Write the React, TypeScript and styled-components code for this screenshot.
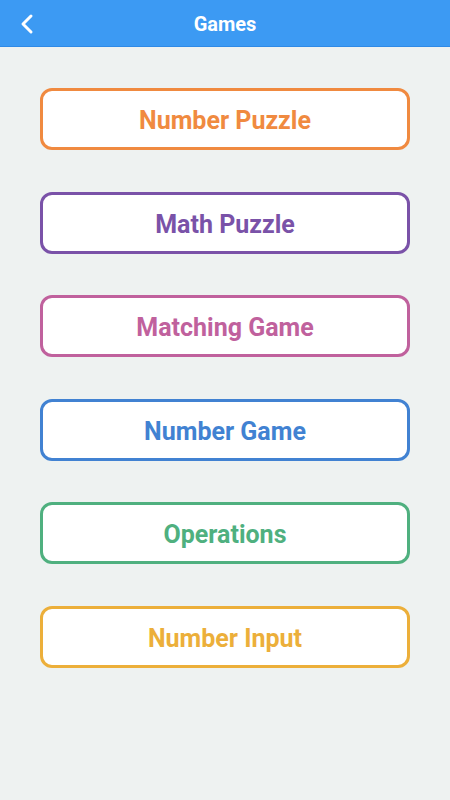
import styled, { createGlobalStyle } from "styled-components";

const Global = createGlobalStyle`
  html, body {
    margin: 0;
    padding: 0;
    background: #eef2f1;
    font-family: Roboto, "Liberation Sans", Arial, sans-serif;
  }
`;

const Page = styled.div`
  width: 450px;
  min-height: 800px;
  background: #eef2f1;
`;

const Header = styled.header`
  height: 46px;
  background: #3c9af3;
  border-bottom: 1px solid #2f8ae6;
  display: flex;
  align-items: center;
  justify-content: center;
  position: relative;
`;

const Back = styled.button`
  position: absolute;
  left: 12px;
  top: 8px;
  width: 30px;
  height: 32px;
  border: none;
  background: transparent;
  padding: 0;
  display: flex;
  align-items: center;
  justify-content: center;
  cursor: pointer;
`;

const Title = styled.h1`
  margin: 0;
  padding-top: 2px;
  color: #fff;
  font-size: 20px;
  font-weight: 700;
`;

const List = styled.div`
  display: flex;
  flex-direction: column;
  align-items: center;
  gap: 41.5px;
  padding-top: 41px;
`;

const GameButton = styled.button<{ $color: string }>`
  width: 370px;
  height: 62px;
  box-sizing: border-box;
  padding: 3px 0 0;
  background: #fff;
  border: 3px solid ${(p) => p.$color};
  border-radius: 12px;
  color: ${(p) => p.$color};
  font-family: Roboto, "Liberation Sans", Arial, sans-serif;
  font-size: 25px;
  font-weight: 700;
  cursor: pointer;
`;

const games = [
  { name: "Number Puzzle", color: "#f08a40" },
  { name: "Math Puzzle", color: "#7a52a8" },
  { name: "Matching Game", color: "#c0619d" },
  { name: "Number Game", color: "#4182d2" },
  { name: "Operations", color: "#4fb07f" },
  { name: "Number Input", color: "#ecaf3a" },
];

export default function App() {
  return (
    <Page>
      <Global />
      <Header>
        <Back aria-label="back">
          <svg width="16" height="22" viewBox="0 0 16 22">
            <path d="M12 3 L4 11 L12 19" fill="none" stroke="#fff" strokeWidth="3" strokeLinecap="round" strokeLinejoin="round" />
          </svg>
        </Back>
        <Title>Games</Title>
      </Header>
      <List>
        {games.map((g) => (
          <GameButton key={g.name} $color={g.color}>
            {g.name}
          </GameButton>
        ))}
      </List>
    </Page>
  );
}
